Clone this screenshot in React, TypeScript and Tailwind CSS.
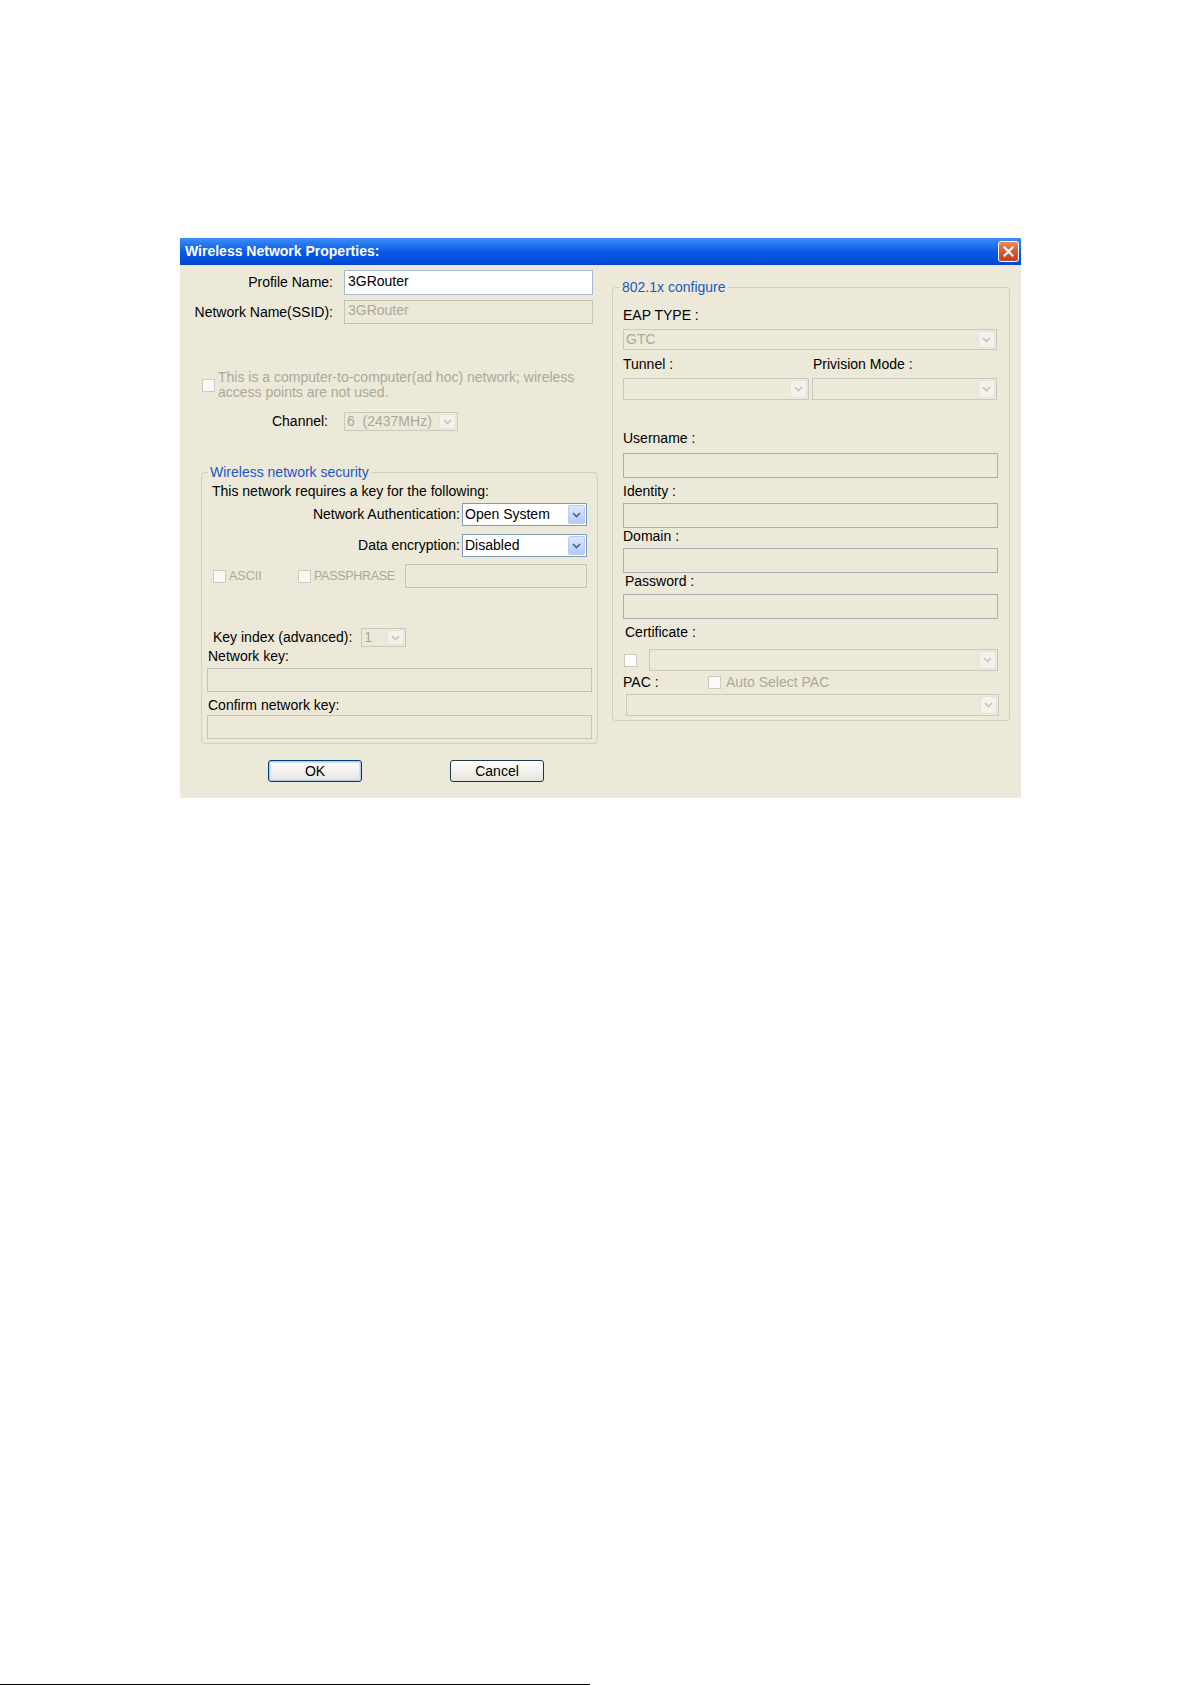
import React from 'react'

const font = "font-['Liberation_Sans',Arial,sans-serif]"

function Chevron({ enabled }: { enabled?: boolean }) {
  return (
    <svg width="9" height="6" viewBox="0 0 9 6">
      <path d="M1 1 L4.5 4.5 L8 1" fill="none" stroke={enabled ? '#4d6185' : '#c4c3ba'} strokeWidth="1.6" />
    </svg>
  )
}

interface DropDownProps {
  className: string;
  value?: string;
  enabled?: boolean;
}

const DropDown = ({ className, value = '', enabled = false }: DropDownProps) => {
  return (
    <div className={`flex items-stretch border ${enabled ? 'border-[#7f9db9] bg-white' : 'border-[#cbc9bd] bg-[#ece9d8]'} ${className}`}>
      <div className={`flex-1 flex items-center pl-[2px] whitespace-pre ${enabled ? 'text-black' : 'text-[#aca899]'}`}>{value}</div>
      {enabled ? (
        <div className='w-[17px] my-[1px] mr-[1px] flex items-center justify-center rounded-[2px] border border-[#b9ccf5] bg-linear-to-b from-[#dde7fd] to-[#b6c9f6]'>
          <Chevron enabled />
        </div>
      ) : (
        <div className='w-[17px] my-[1px] mr-[1px] flex items-center justify-center rounded-[2px] border border-[#e6e4da] bg-[#f3f2ec]'>
          <Chevron />
        </div>
      )}
    </div>
  )
}

const TextBox = ({ className, value = '', enabled = false }: DropDownProps) => {
  return (
    <div className={`flex items-center pl-[3px] pb-[3px] border ${enabled ? 'border-[#a9bbd0] bg-white text-black' : 'border-[#c4c4bb] bg-[#ece9d8] text-[#aca899]'} ${className}`}>
      {value}
    </div>
  )
}

const BlueBox = ({ className }: { className: string }) => (
  <div className={`border border-[#a8afb8] bg-[#ece9d8] ${className}`} />
)

const Check = ({ className = '' }: { className?: string }) => (
  <div className={`w-[13px] h-[13px] border border-[#cdcbbf] bg-[#f9f9f6] shrink-0 ${className}`} />
)

const CloseBtn = () => (
  <div className='w-[21px] h-[21px] rounded-[3px] border border-white flex items-center justify-center bg-linear-to-b from-[#e98a62] via-[#d9582f] to-[#c4401c]'>
    <svg width="11" height="11" viewBox="0 0 11 11">
      <path d="M1.5 1.5 L9.5 9.5 M9.5 1.5 L1.5 9.5" stroke="white" strokeWidth="2.2" strokeLinecap="square" />
    </svg>
  </div>
)

const LeftColumn = () => (
  <div className='w-[424px] flex flex-col'>
    <div className='mt-[5px] h-[25px] flex items-center'>
      <span className='w-[153px] text-right'>Profile Name:</span>
      <TextBox className='ml-[11px] w-[249px] h-[25px]' value='3GRouter' enabled />
    </div>
    <div className='mt-[5px] h-[24px] flex items-center'>
      <span className='w-[153px] text-right'>Network Name(SSID):</span>
      <TextBox className='ml-[11px] w-[249px] h-[24px]' value='3GRouter' />
    </div>

    <div className='mt-[46px] ml-[22px] flex items-center'>
      <Check />
      <span className='ml-[3px] leading-[15px] text-[#aca899]'>
        This is a computer-to-computer(ad hoc) network; wireless<br />access points are not used.
      </span>
    </div>

    <div className='mt-[12px] h-[19px] flex items-center'>
      <span className='w-[148px] text-right'>Channel:</span>
      <DropDown className='ml-[16px] w-[114px] h-[19px]' value='6  (2437MHz)' />
    </div>

    <fieldset className='mt-[33px] ml-[21px] w-[397px] border border-[#d0d0bf] rounded-[4px] px-[5px] pb-[4px] flex flex-col'>
      <legend className='ml-[1px] px-[2px] leading-[16px] text-[#2057c9]'>Wireless network security</legend>
      <div className='mt-[4px] ml-[5px] leading-[15px]'>This network requires a key for the following:</div>
      <div className='mt-[4px] mr-[5px] h-[23px] flex items-center justify-end'>
        <span className='mr-[2px]'>Network Authentication:</span>
        <DropDown className='w-[125px] h-[23px]' value='Open System' enabled />
      </div>
      <div className='mt-[8px] mr-[5px] h-[23px] flex items-center justify-end'>
        <span className='mr-[2px]'>Data encryption:</span>
        <DropDown className='w-[125px] h-[23px]' value='Disabled' enabled />
      </div>
      <div className='mt-[7px] ml-[6px] mr-[5px] h-[24px] flex items-center text-[#aca899] text-[12.5px]'>
        <div className='w-[85px] flex items-center'>
          <Check className='w-[12px] h-[12px]' />
          <span className='ml-[3px]'>ASCII</span>
        </div>
        <Check className='w-[12px] h-[12px]' />
        <span className='ml-[3px] tracking-[-0.3px]'>PASSPHRASE</span>
        <TextBox className='ml-auto w-[182px] h-[24px]' />
      </div>
      <div className='mt-[40px] ml-[6px] h-[19px] flex items-center'>
        <span>Key index (advanced):</span>
        <DropDown className='ml-[9px] w-[45px] h-[19px]' value='1' />
      </div>
      <div className='mt-[2px] ml-[1px] leading-[15px]'>Network key:</div>
      <TextBox className='mt-[4px] w-[385px] h-[24px]' />
      <div className='mt-[6px] ml-[1px] leading-[15px]'>Confirm network key:</div>
      <TextBox className='mt-[2px] w-[385px] h-[24px]' />
    </fieldset>

    <div className='mt-[16px] ml-[88px] flex'>
      <div className='w-[94px] h-[22px] flex items-center justify-center rounded-[3px] border border-[#003c74] bg-linear-to-b from-white to-[#e4e3dc] shadow-[inset_0_0_0_1px_#b4cbf1,inset_0_0_0_2px_#d6e2f7]'>OK</div>
      <div className='ml-[88px] w-[94px] h-[22px] flex items-center justify-center rounded-[3px] border border-[#1f3548] bg-linear-to-b from-white to-[#e4e3dc]'>Cancel</div>
    </div>
  </div>
)

const RightColumn = () => (
  <div className='flex flex-col'>
    <fieldset className='mt-[14px] ml-[8px] w-[392px] border border-[#d0d0bf] rounded-[4px] px-[10px] pb-[4px] flex flex-col'>
      <legend className='-ml-[3px] px-[2px] leading-[16px] text-[#2057c9]'>802.1x configure</legend>
      <div className='mt-[13px] leading-[15px]'>EAP TYPE :</div>
      <DropDown className='mt-[6px] w-[374px] h-[21px]' value='GTC' />
      <div className='mt-[7px] flex leading-[15px]'>
        <span className='w-[190px]'>Tunnel :</span>
        <span>Privision Mode :</span>
      </div>
      <div className='mt-[6px] flex'>
        <DropDown className='w-[186px] h-[22px]' />
        <DropDown className='ml-[3px] w-[185px] h-[22px]' />
      </div>
      <div className='mt-[31px] leading-[15px]'>Username :</div>
      <BlueBox className='mt-[7px] w-[375px] h-[25px]' />
      <div className='mt-[6px] leading-[15px]'>Identity :</div>
      <BlueBox className='mt-[4px] w-[375px] h-[25px]' />
      <div className='mt-[1px] leading-[15px]'>Domain :</div>
      <BlueBox className='mt-[4px] w-[375px] h-[25px]' />
      <div className='mt-[1px] ml-[2px] leading-[15px]'>Password :</div>
      <BlueBox className='mt-[5px] w-[375px] h-[25px]' />
      <div className='mt-[6px] ml-[2px] leading-[15px]'>Certificate :</div>
      <div className='mt-[9px] flex items-center'>
        <Check className='ml-[1px] bg-white' />
        <DropDown className='ml-[12px] w-[349px] h-[22px]' />
      </div>
      <div className='mt-[4px] h-[15px] flex items-center'>
        <span className='w-[85px]'>PAC :</span>
        <Check className='w-[12px] h-[12px]' />
        <span className='ml-[5px] text-[#aca899]'>Auto Select PAC</span>
      </div>
      <DropDown className='mt-[4px] ml-[3px] w-[373px] h-[22px]' />
    </fieldset>
  </div>
)

export default function App() {
  return (
    <div className={`h-[1685px] bg-white flex flex-col text-[14px] text-black ${font}`}>
      <div className='mt-[238px] ml-[180px] w-[841px] h-[560px] bg-[#ece9d8] flex flex-col'>
        <div className='h-[27px] shrink-0 flex items-center justify-between pl-[5px] pr-[2px] bg-linear-to-b from-[#3d8ef7] via-[#0a5be8] to-[#0046d3]'>
          <span className='text-white font-bold text-[14px]'>Wireless Network Properties:</span>
          <CloseBtn />
        </div>
        <div className='flex'>
          <LeftColumn />
          <RightColumn />
        </div>
      </div>
      <div className='mt-auto w-[590px] h-[1px] bg-black' />
    </div>
  )
}
